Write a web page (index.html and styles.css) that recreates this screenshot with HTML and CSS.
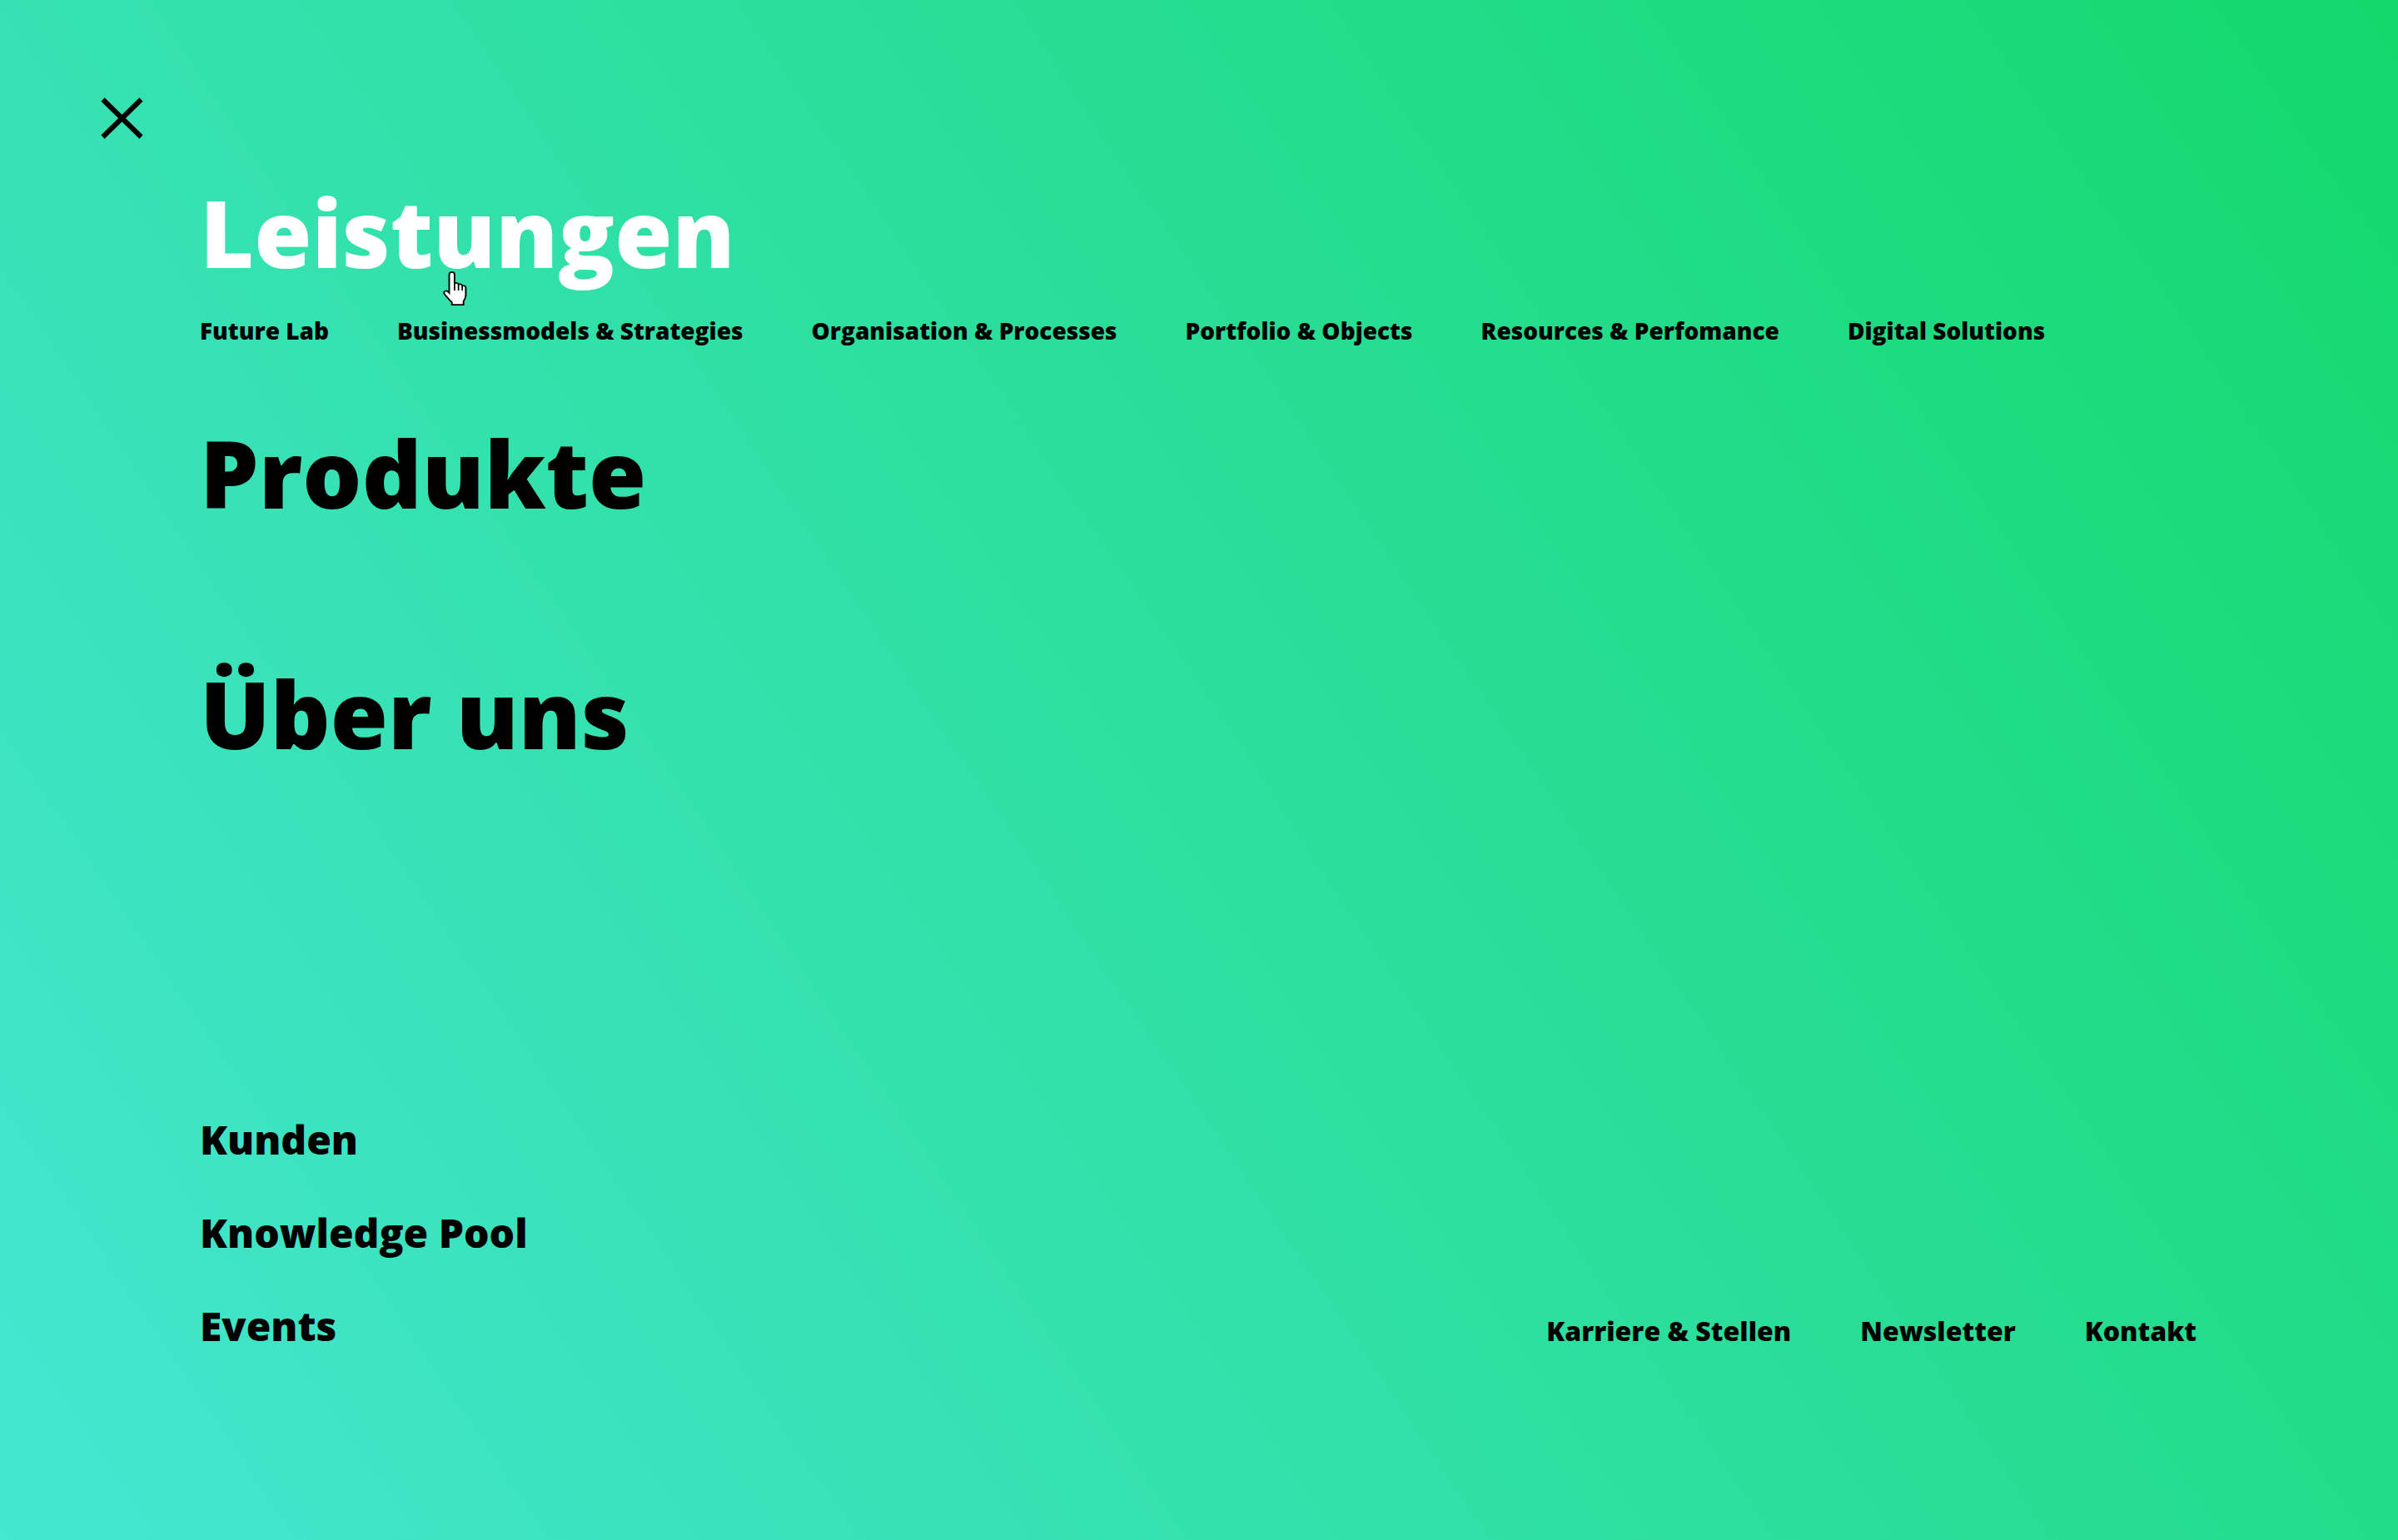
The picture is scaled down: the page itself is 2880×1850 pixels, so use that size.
FILE: index.html
```html
<!DOCTYPE html>
<html lang="de">
<head>
<meta charset="utf-8">
<title>Menü</title>
<link rel="stylesheet" href="styles.css">
</head>
<body>
<div class="menu">
  <button class="close" aria-label="Menü schließen">
    <svg class="close-icon" width="51" height="50" viewBox="0 0 51 50">
      <line x1="2.5" y1="2.5" x2="48.5" y2="47.5"/>
      <line x1="48.5" y1="2.5" x2="2.5" y2="47.5"/>
    </svg>
  </button>

  <nav class="primary">
    <div class="primary-item">
      <a class="primary-link is-active" href="#">Leistungen</a>
      <ul class="sub">
        <li><a href="#">Future Lab</a></li>
        <li><a href="#">Businessmodels &amp; Strategies</a></li>
        <li><a href="#">Organisation &amp; Processes</a></li>
        <li><a href="#">Portfolio &amp; Objects</a></li>
        <li><a href="#">Resources &amp; Perfomance</a></li>
        <li><a href="#">Digital Solutions</a></li>
      </ul>
    </div>
    <div class="primary-item">
      <a class="primary-link" href="#">Produkte</a>
    </div>
    <div class="primary-item">
      <a class="primary-link" href="#">Über uns</a>
    </div>
  </nav>

  <div class="bottom">
    <ul class="secondary">
      <li><a href="#">Kunden</a></li>
      <li><a href="#">Knowledge Pool</a></li>
      <li><a href="#">Events</a></li>
    </ul>
    <ul class="meta">
      <li><a href="#">Karriere &amp; Stellen</a></li>
      <li><a href="#">Newsletter</a></li>
      <li><a href="#">Kontakt</a></li>
    </ul>
  </div>

  <svg class="cursor" width="30" height="42" viewBox="0 0 14 22" preserveAspectRatio="none">
    <path class="cursor-hand" d="M5,0.5 C5.8,0.5 6.5,1 6.5,2 L6.5,7.5 C7.5,7 8.5,7.3 8.7,8.2 C9.6,7.8 10.6,8.2 10.8,9 C11.8,8.7 12.8,9.2 12.8,10.3 L12.8,15 C12.8,16.5 12,18 11.5,19 L11.5,21 L5,21 L5,19.5 C4,18.5 2.5,16.5 1,14.5 C0.3,13.5 0.5,12.5 1.5,12.3 C2.3,12.1 3,12.8 3.5,13.5 L3.5,2 C3.5,1 4.2,0.5 5,0.5 Z"/>
    <path class="cursor-lines" d="M6.5,7.5 L6.5,12 M8.7,8.2 L8.7,12 M10.8,9 L10.8,12"/>
  </svg>
</div>
</body>
</html>
```

FILE: styles.css
```css
html, body {
  margin: 0;
  padding: 0;
}

body {
  font-family: "Open Sans", "Liberation Sans", sans-serif;
  color: #000;
}

a {
  color: inherit;
  text-decoration: none;
}

ul {
  list-style: none;
  margin: 0;
  padding: 0;
}

.menu {
  position: relative;
  box-sizing: border-box;
  height: 1850px;
  padding: 117px 242px 227px 240px;
  display: flex;
  flex-direction: column;
  background: linear-gradient(56deg, #45e6d2 0%, #14d86c 100%);
  overflow: hidden;
}

.close {
  align-self: flex-start;
  margin: 0 0 0 -119px;
  padding: 0;
  border: 0;
  background: none;
  cursor: pointer;
  display: block;
}

.close-icon {
  display: block;
}

.close-icon line {
  stroke: #000;
  stroke-width: 6;
  stroke-linecap: butt;
}

.primary {
  margin-top: 45px;
  display: grid;
  grid-auto-rows: 289px;
}

.primary-link {
  display: block;
  font-size: 112px;
  line-height: 134px;
  font-weight: 800;
  color: #000;
  white-space: nowrap;
}

.primary-link.is-active {
  color: #fff;
}

.sub {
  margin-top: 34px;
  display: flex;
  gap: 82px;
  font-size: 28px;
  line-height: 34px;
  font-weight: 800;
  white-space: nowrap;
}

.bottom {
  margin-top: auto;
  display: flex;
  justify-content: space-between;
  align-items: last baseline;
}

.secondary {
  display: flex;
  flex-direction: column;
  gap: 52px;
  font-size: 48px;
  line-height: 60px;
  font-weight: 800;
}

.meta {
  display: flex;
  gap: 83px;
  font-size: 32px;
  line-height: 38px;
  font-weight: 800;
  white-space: nowrap;
}

.cursor {
  position: absolute;
  left: 532px;
  top: 326px;
}

.cursor-hand {
  fill: #fff;
  stroke: #000;
  stroke-width: 0.9;
  stroke-linejoin: miter;
}

.cursor-lines {
  fill: none;
  stroke: #000;
  stroke-width: 0.8;
}
```
